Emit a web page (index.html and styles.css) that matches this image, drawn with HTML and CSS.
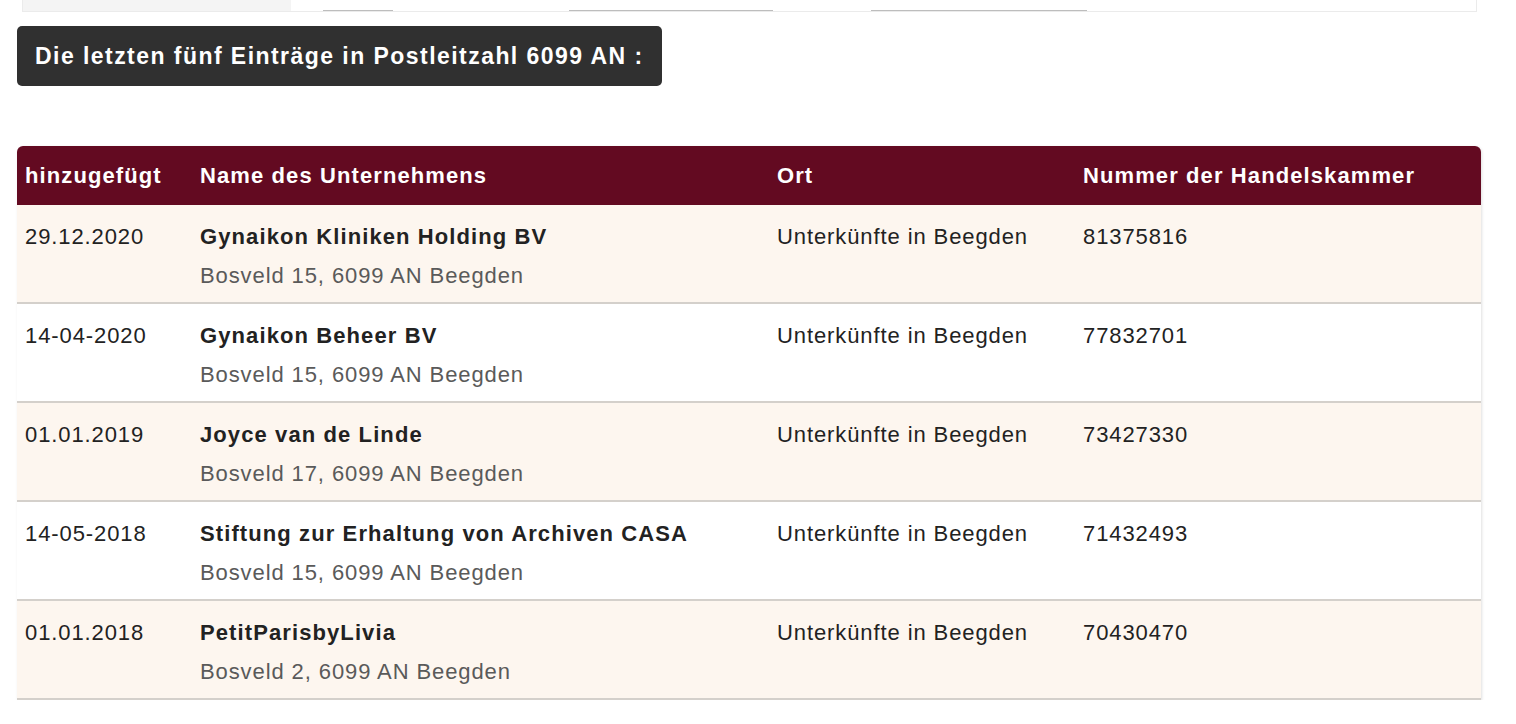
FILE: index.html
```html
<!DOCTYPE html>
<html lang="de">
<head>
<meta charset="utf-8">
<title>Postleitzahl 6099 AN</title>
<link rel="stylesheet" href="styles.css">
</head>
<body>
<div class="page">
  <div class="topstrip">
    <div class="topstrip-left"></div>
    <div class="topstrip-lines">
      <span class="seg seg1"></span>
      <span class="seg seg2"></span>
      <span class="seg seg3"></span>
    </div>
  </div>

  <h2 class="heading">Die letzten fünf Einträge in Postleitzahl 6099 AN :</h2>

  <table class="entries">
    <thead>
      <tr>
        <th class="c-date">hinzugefügt</th>
        <th class="c-name">Name des Unternehmens</th>
        <th class="c-ort">Ort</th>
        <th class="c-kvk">Nummer der Handelskammer</th>
      </tr>
    </thead>
    <tbody>
      <tr class="odd">
        <td>29.12.2020</td>
        <td><div class="name">Gynaikon Kliniken Holding BV</div><div class="addr">Bosveld 15, 6099 AN Beegden</div></td>
        <td>Unterkünfte in Beegden</td>
        <td>81375816</td>
      </tr>
      <tr>
        <td>14-04-2020</td>
        <td><div class="name">Gynaikon Beheer BV</div><div class="addr">Bosveld 15, 6099 AN Beegden</div></td>
        <td>Unterkünfte in Beegden</td>
        <td>77832701</td>
      </tr>
      <tr class="odd">
        <td>01.01.2019</td>
        <td><div class="name">Joyce van de Linde</div><div class="addr">Bosveld 17, 6099 AN Beegden</div></td>
        <td>Unterkünfte in Beegden</td>
        <td>73427330</td>
      </tr>
      <tr>
        <td>14-05-2018</td>
        <td><div class="name">Stiftung zur Erhaltung von Archiven CASA</div><div class="addr">Bosveld 15, 6099 AN Beegden</div></td>
        <td>Unterkünfte in Beegden</td>
        <td>71432493</td>
      </tr>
      <tr class="odd">
        <td>01.01.2018</td>
        <td><div class="name">PetitParisbyLivia</div><div class="addr">Bosveld 2, 6099 AN Beegden</div></td>
        <td>Unterkünfte in Beegden</td>
        <td>70430470</td>
      </tr>
    </tbody>
  </table>
</div>
</body>
</html>
```

FILE: styles.css
```css
html, body {
  margin: 0;
  padding: 0;
  background: #ffffff;
}

body {
  font-family: "Liberation Sans", Arial, Helvetica, sans-serif;
  color: #222222;
}

.page {
  padding: 0 35px 0 17px;
}

.topstrip {
  display: flex;
  margin-left: 5px;
  width: 1453px;
  height: 11px;
  border-bottom: 1px solid #ebebeb;
  border-right: 1px solid #ebebeb;
  border-left: 1px solid #ebebeb;
  box-sizing: content-box;
}

.topstrip-left {
  width: 268px;
  background: #f4f4f4;
}

.topstrip-lines {
  flex: 1;
  display: flex;
  align-items: flex-end;
}

.seg {
  display: block;
  height: 1px;
  background: #bdbdbd;
}

.seg1 { margin-left: 32px; width: 70px; }
.seg2 { margin-left: 176px; width: 204px; }
.seg3 { margin-left: 98px; width: 216px; }

.heading {
  display: inline-block;
  margin: 14px 0 0 0;
  height: 60px;
  box-sizing: border-box;
  padding: 0 18px;
  background: #303030;
  border-radius: 5px;
  color: #ffffff;
  font-size: 23px;
  font-weight: bold;
  letter-spacing: 1.45px;
  line-height: 60px;
  white-space: nowrap;
}

.entries {
  margin-top: 60px;
  width: 1464px;
  border-collapse: separate;
  border-spacing: 0;
  box-shadow: 1px 1px 3px rgba(0, 0, 0, 0.12);
  border-radius: 6px 6px 0 0;
  table-layout: fixed;
}

.entries th {
  height: 59px;
  padding: 0 0 0 8px;
  background: #630a21;
  color: #ffffff;
  text-align: left;
  font-size: 22px;
  font-weight: bold;
  letter-spacing: 1.1px;
  vertical-align: middle;
  white-space: nowrap;
}

.entries th.c-date { width: 167px; border-top-left-radius: 6px; }
.entries th.c-name { width: 569px; }
.entries th.c-ort { width: 298px; }
.entries th.c-kvk { border-top-right-radius: 6px; }

.entries td {
  height: 96px;
  box-sizing: border-box;
  padding: 12px 0 7px 8px;
  vertical-align: top;
  font-size: 22px;
  letter-spacing: 0.9px;
  line-height: 39px;
  color: #222222;
  border-bottom: 2px solid #d4d0cb;
  white-space: nowrap;
}

.entries tr.odd td {
  background: #fdf6ef;
}

.name {
  font-weight: bold;
  letter-spacing: 1.1px;
  color: #222222;
}

.addr {
  color: #5a5a5a;
}
```
